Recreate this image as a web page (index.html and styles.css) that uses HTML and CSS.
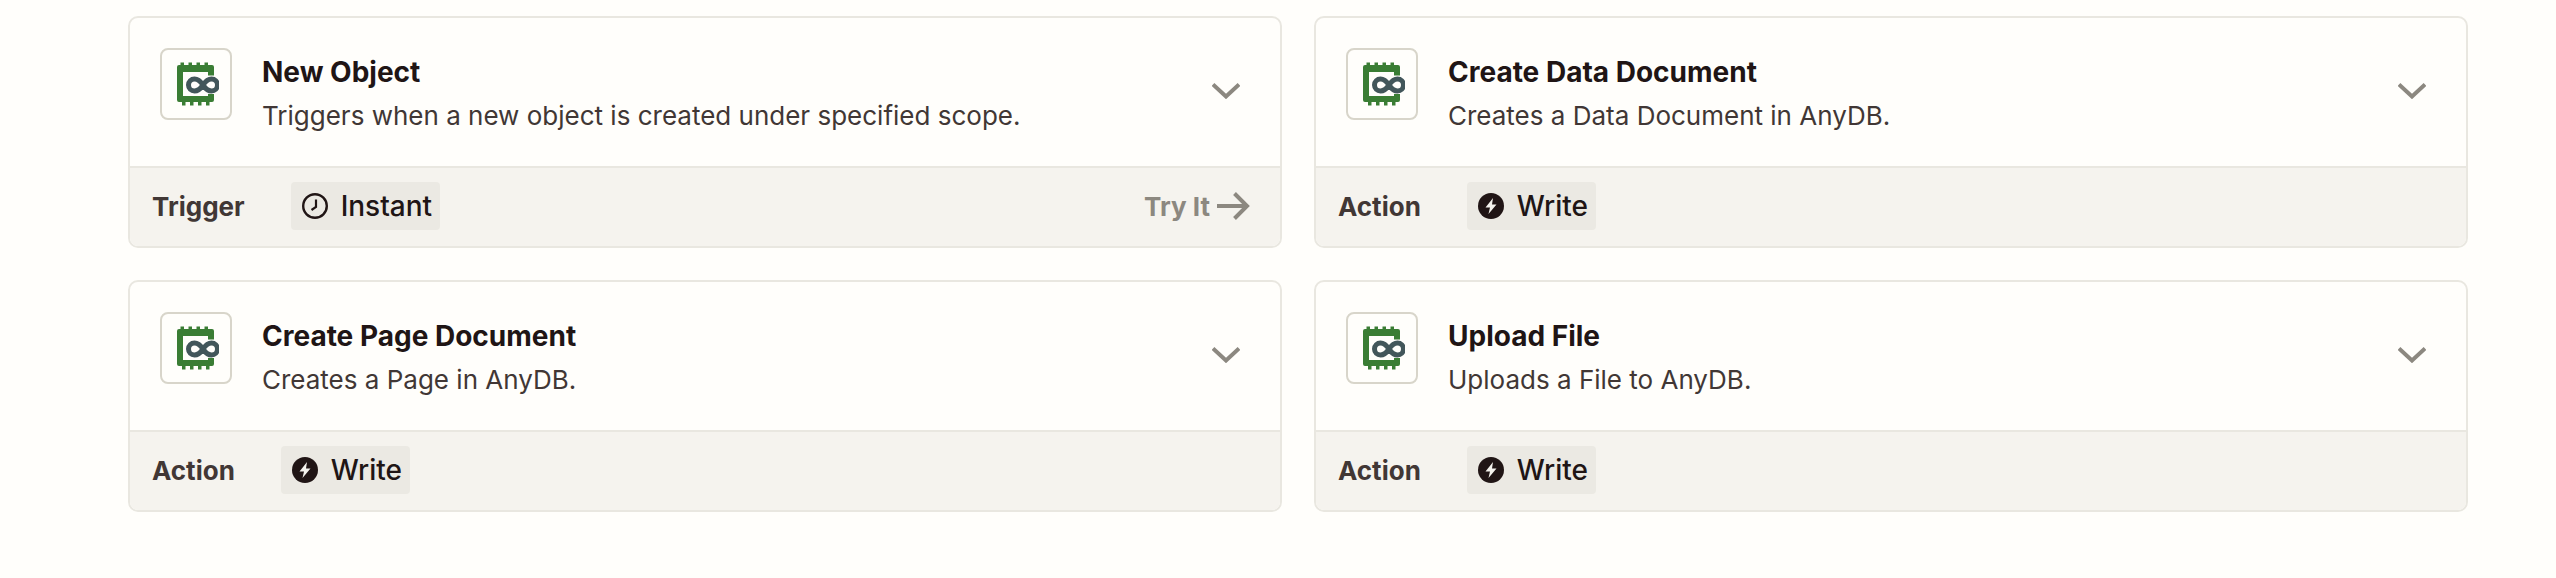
FILE: index.html
```html
<!DOCTYPE html>
<html lang="en">
<head>
<meta charset="utf-8">
<title>AnyDB triggers and actions</title>
<link rel="stylesheet" href="styles.css">
</head>
<body>
<svg class="defs" width="0" height="0" aria-hidden="true">
  <symbol id="logo" viewBox="0 0 46 44">
    <path fill="#3a7d34" fill-rule="evenodd" d="M6 3h1.500V.500h3.500V3h4.500V.500h3.500V3h4.500V.500h3.500V3h4.500V.500h3.500V3H39a2 2 0 0 1 2 2v8.500h-6V10H10v24h25v-2h6v6a2 2 0 0 1-2 2h-2.500v3.500H33V40h-4.500v3.500H25V40h-4.500v3.500H17V40h-4.500v3.500H9V40H6a2 2 0 0 1-2-2V5a2 2 0 0 1 2-2z"/>
    <path fill="none" stroke="#42565a" stroke-width="5" d="M21.500 17a6 6 0 0 0 0 12c4 0 6.500-3 8.500-6s4.500-6 8.500-6a6 6 0 0 1 0 12c-4 0-6.500-3-8.500-6s-4.500-6-8.500-6z"/>
  </symbol>
  <symbol id="bolt" viewBox="0 0 26 26">
    <circle cx="13" cy="13" r="13" fill="#201515"/>
    <path fill="#f4f2ed" d="M15 5 7.500 14.500H12L10.500 21 18.500 11.500H14z"/>
  </symbol>
  <symbol id="clock" viewBox="0 0 26 26">
    <circle cx="13" cy="13" r="11.800" fill="none" stroke="#201515" stroke-width="2.400"/>
    <path fill="none" stroke="#201515" stroke-width="2.200" d="M14 6.500V14L9.500 17"/>
  </symbol>
  <symbol id="chevron" viewBox="0 0 28 16">
    <path fill="none" stroke="#8c8880" stroke-width="4" d="M1 1.500 14 13.500 27 1.500"/>
  </symbol>
  <symbol id="arrow" viewBox="0 0 33 28">
    <path fill="none" stroke="#8c8880" stroke-width="4" d="M0 14h30M17.500 1.500 30 14 17.500 26.500"/>
  </symbol>
</svg>
<main class="grid">
  <article class="card">
    <div class="head">
      <span class="logo-box"><svg class="logo"><use href="#logo"/></svg></span>
      <div class="copy">
        <h3 class="title">New Object</h3>
        <p class="desc">Triggers when a new object is created under specified scope.</p>
      </div>
      <svg class="chevron"><use href="#chevron"/></svg>
    </div>
    <div class="foot">
      <span class="kind">Trigger</span>
      <span class="pill"><svg class="pill-icon"><use href="#clock"/></svg>Instant</span>
      <span class="try">Try It<svg class="arrow"><use href="#arrow"/></svg></span>
    </div>
  </article>
  <article class="card">
    <div class="head">
      <span class="logo-box"><svg class="logo"><use href="#logo"/></svg></span>
      <div class="copy">
        <h3 class="title">Create Data Document</h3>
        <p class="desc">Creates a Data Document in AnyDB.</p>
      </div>
      <svg class="chevron"><use href="#chevron"/></svg>
    </div>
    <div class="foot">
      <span class="kind">Action</span>
      <span class="pill"><svg class="pill-icon"><use href="#bolt"/></svg>Write</span>
    </div>
  </article>
  <article class="card">
    <div class="head">
      <span class="logo-box"><svg class="logo"><use href="#logo"/></svg></span>
      <div class="copy">
        <h3 class="title">Create Page Document</h3>
        <p class="desc">Creates a Page in AnyDB.</p>
      </div>
      <svg class="chevron"><use href="#chevron"/></svg>
    </div>
    <div class="foot">
      <span class="kind">Action</span>
      <span class="pill"><svg class="pill-icon"><use href="#bolt"/></svg>Write</span>
    </div>
  </article>
  <article class="card">
    <div class="head">
      <span class="logo-box"><svg class="logo"><use href="#logo"/></svg></span>
      <div class="copy">
        <h3 class="title">Upload File</h3>
        <p class="desc">Uploads a File to AnyDB.</p>
      </div>
      <svg class="chevron"><use href="#chevron"/></svg>
    </div>
    <div class="foot">
      <span class="kind">Action</span>
      <span class="pill"><svg class="pill-icon"><use href="#bolt"/></svg>Write</span>
    </div>
  </article>
</main>
</body>
</html>
```
FILE: styles.css
```css
* { box-sizing: border-box; }
html, body { height: 100%; }
body {
  margin: 0;
  background: #fffefb;
  font-family: Inter, "Liberation Sans", sans-serif;
  color: #201515;
  overflow: hidden;
}
.defs { position: absolute; }
.grid {
  display: grid;
  grid-template-columns: 1154px 1154px;
  gap: 32px;
  padding: 16px 0 0 128px;
}
.card {
  height: 232px;
  border: 2px solid #e9e7e0;
  border-radius: 10px;
  overflow: hidden;
  display: flex;
  flex-direction: column;
}
.head {
  flex: 1;
  display: flex;
  align-items: flex-start;
  padding: 30px 40px 0 30px;
}
.logo-box {
  width: 72px;
  height: 72px;
  flex: none;
  display: flex;
  align-items: center;
  justify-content: center;
  border: 2px solid #d8d5ca;
  border-radius: 8px;
  background: #fffefb;
}
.logo { width: 46px; height: 44px; flex: none; }
.copy { flex: 1; margin-left: 30px; }
.title {
  margin: 4px 0 0;
  font-size: 28px;
  line-height: 40px;
  font-weight: 700;
}
.desc {
  margin: 6px 0 0;
  font-size: 26px;
  line-height: 36px;
  color: #413735;
}
.chevron { width: 28px; height: 16px; flex: none; margin-top: 35px; }
.foot {
  height: 80px;
  flex: none;
  display: flex;
  align-items: center;
  gap: 46px;
  padding: 0 30px 2px 22px;
  background: #f5f3ee;
  border-top: 2px solid #e9e7e0;
}
.kind { font-size: 26px; font-weight: 700; color: #413735; }
.pill {
  height: 48px;
  display: flex;
  align-items: center;
  gap: 13px;
  padding: 0 8px 0 11px;
  border-radius: 4px;
  background: #ebe9e3;
  font-size: 28px;
  font-weight: 500;
}
.pill-icon { width: 26px; height: 26px; flex: none; }
.try {
  margin-left: auto;
  display: flex;
  align-items: center;
  gap: 7px;
  font-size: 26px;
  font-weight: 700;
  color: #8c8880;
}
.arrow { width: 33px; height: 28px; flex: none; }
```
